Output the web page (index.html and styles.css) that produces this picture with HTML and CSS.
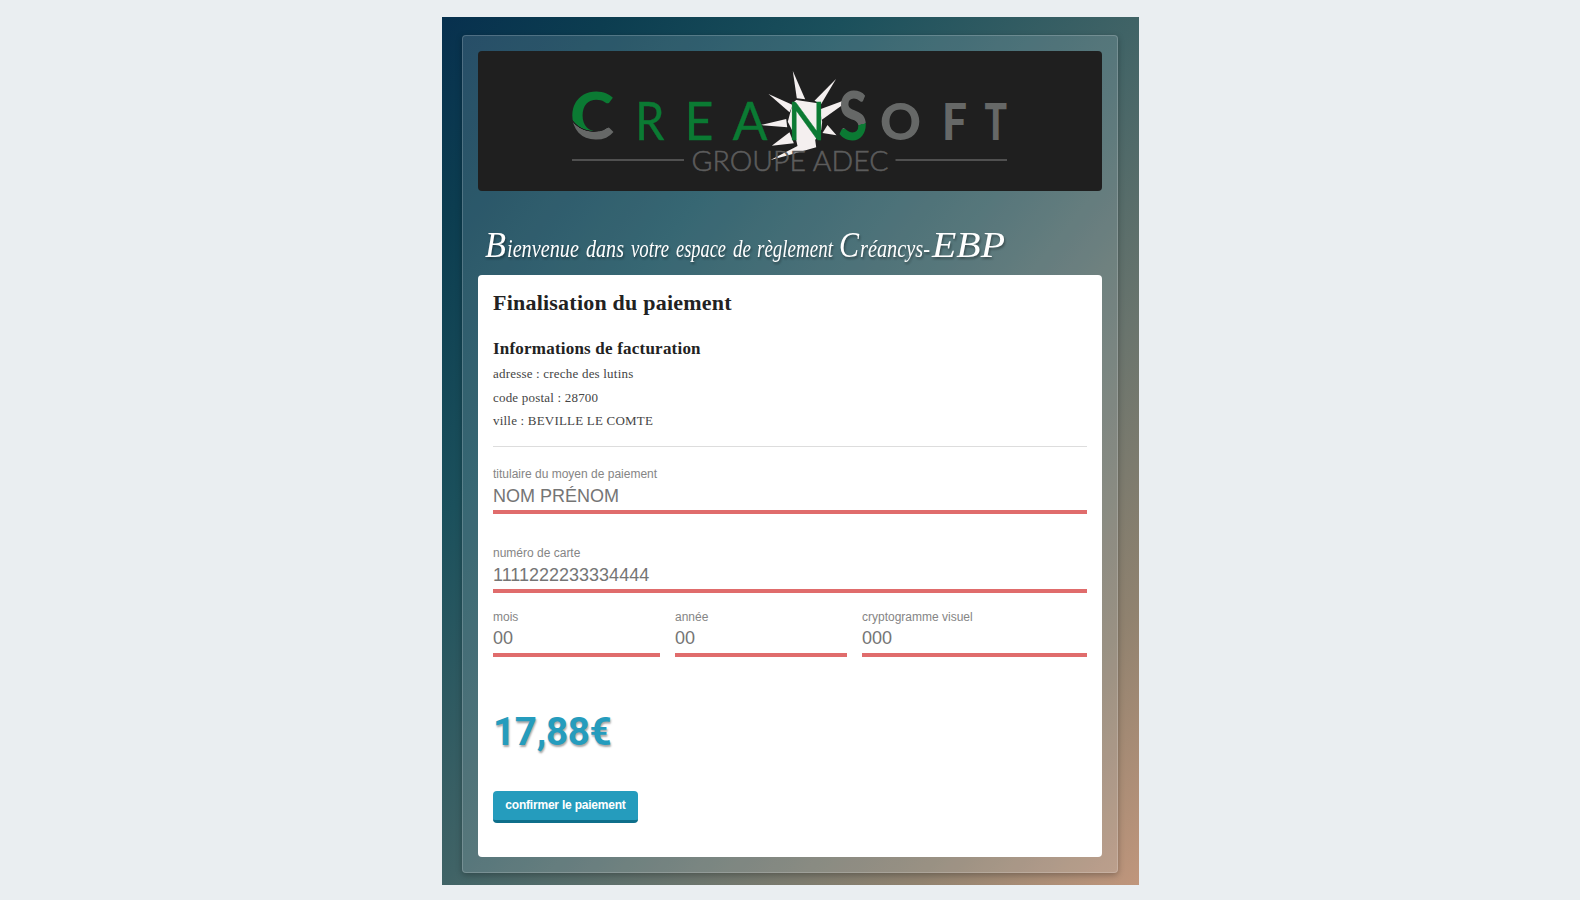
FILE: index.html
```
<!DOCTYPE html>
<html lang="fr">
<head>
<meta charset="utf-8">
<title>Finalisation du paiement</title>
<link rel="stylesheet" href="styles.css">
</head>
<body>
<main class="stage">
  <div class="panel">
    <header class="brand">
      <svg class="logo" viewBox="479 51 623 140" role="img" aria-label="CreanSoft Groupe Adec">
        <defs>
          <radialGradient id="c-fill" gradientUnits="userSpaceOnUse" cx="594" cy="105" r="50">
            <stop offset="0.51" stop-color="#0b7a33"/><stop offset="0.52" stop-color="#1f1f1f"/>
            <stop offset="0.53" stop-color="#1f1f1f"/><stop offset="0.54" stop-color="#666867"/>
          </radialGradient>
          <linearGradient id="s-fill" gradientUnits="userSpaceOnUse" x1="852" y1="124" x2="854" y2="132">
            <stop offset="0.3" stop-color="#666867"/><stop offset="0.35" stop-color="#0b7a33"/>
          </linearGradient>
        </defs>
        <g fill="#f4efef">
          <path d="M793.3 71L797.3 98.3 805.7 99.3Z"/>
          <path d="M836.5 79L815 100.7 821.7 104Z"/>
          <path d="M843 101L820.7 109.3 822 120 843 105Z"/>
          <path d="M837 135.3L828 125 823 133Z"/>
          <path d="M769 94L793.3 105 790 112.3Z"/>
          <path d="M761 125L786.7 119 787.7 127.3Z"/>
          <path d="M772.3 145.7L790 132.3 794.3 143.3Z"/>
          <path d="M796.7 100L818.3 103.3 822.7 121.7 821.7 130 815.7 140 816.7 147.3 786 156 771 160 798 146 796 137 788.3 121.7 793.3 103Z"/>
        </g>
        <g class="logo-thin">
          <text x="635.500" y="140" textLength="29.500" lengthAdjust="spacingAndGlyphs">R</text>
          <text x="685" y="140" textLength="29" lengthAdjust="spacingAndGlyphs">E</text>
          <text x="733" y="140" textLength="35" lengthAdjust="spacingAndGlyphs">A</text>
          <text x="788" y="140" textLength="38" lengthAdjust="spacingAndGlyphs">N</text>
        </g>
        <g class="logo-bold">
          <text class="logo-c" x="570.500" y="139" textLength="44" lengthAdjust="spacingAndGlyphs">C</text>
          <text class="logo-s" x="839" y="140" textLength="29" lengthAdjust="spacingAndGlyphs">S</text>
          <text x="880.500" y="140" textLength="41" lengthAdjust="spacingAndGlyphs">O</text>
          <text x="942.500" y="140" textLength="25" lengthAdjust="spacingAndGlyphs">F</text>
          <text x="985" y="140" textLength="22.500" lengthAdjust="spacingAndGlyphs">T</text>
        </g>
        <text class="logo-group" x="692" y="170.500" textLength="197" lengthAdjust="spacingAndGlyphs">GROUPE ADEC</text>
        <path d="M572.500 160H684.500M896 160H1007.500" stroke="#505050" stroke-width="2"/>
      </svg>
    </header>
    <p class="welcome"><svg class="welcome-line" viewBox="478 229 624 46">
      <text class="cap" x="485" y="257" textLength="21" lengthAdjust="spacingAndGlyphs">B</text>
      <text x="507" y="257" textLength="72" lengthAdjust="spacingAndGlyphs">ienvenue</text>
      <text x="586" y="257" textLength="38" lengthAdjust="spacingAndGlyphs">dans</text>
      <text x="631" y="257" textLength="38" lengthAdjust="spacingAndGlyphs">votre</text>
      <text x="676" y="257" textLength="50" lengthAdjust="spacingAndGlyphs">espace</text>
      <text x="733" y="257" textLength="18" lengthAdjust="spacingAndGlyphs">de</text>
      <text x="757" y="257" textLength="76" lengthAdjust="spacingAndGlyphs">règlement</text>
      <text class="cap" x="839" y="257" textLength="20" lengthAdjust="spacingAndGlyphs">C</text>
      <text x="860" y="257" textLength="70" lengthAdjust="spacingAndGlyphs">réancys-</text>
      <text class="cap" x="932" y="257" textLength="73" lengthAdjust="spacingAndGlyphs">EBP</text>
    </svg></p>
    <section class="sheet">
      <h1>Finalisation du paiement</h1>
      <h2>Informations de facturation</h2>
      <div class="address">
        <p>adresse : creche des lutins</p>
        <p>code postal : 28700</p>
        <p>ville : BEVILLE LE COMTE</p>
      </div>
      <form>
        <label class="field holder">titulaire du moyen de paiement<input placeholder="NOM PRÉNOM"></label>
        <label class="field number">numéro de carte<input placeholder="1111222233334444"></label>
        <div class="row">
          <label class="field">mois<input placeholder="00"></label>
          <label class="field">année<input placeholder="00"></label>
          <label class="field">cryptogramme visuel<input placeholder="000"></label>
        </div>
        <p class="price">17,88€</p>
        <button type="button" class="confirm">confirmer le paiement</button>
      </form>
    </section>
  </div>
</main>
</body>
</html>
```
FILE: styles.css
```
* { box-sizing: border-box; }
body { margin: 0; height: 900px; background: #eaeef1; overflow: hidden; font-family: "Liberation Sans", Arial, sans-serif; }
h1, h2, p { margin: 0; }
.stage {
  width: 697px; height: 868px; margin: 17px 0 0 442px; padding: 18px 21px 12px 20px;
  background: linear-gradient(to bottom right, #07304e 0%, #0c3d50 12%, #1b505c 29%, #406366 50%, #69746d 67%, #90826f 84%, #c0967c 100%);
}
.panel {
  height: 838px; padding: 15px; border: 1px solid rgba(255,255,255,.18); border-radius: 4px;
  background: rgba(205,225,235,.16); box-shadow: 0 2px 6px rgba(0,0,0,.28);
}
.brand { height: 140px; border-radius: 4px; background: #1f1f1f; overflow: hidden; }
.logo { display: block; width: 100%; height: 140px; }
.logo-thin { font-family: Lato, sans-serif; font-size: 52px; fill: #0b7a33; stroke: #0b7a33; stroke-width: .3px; }
.logo-bold { font-family: Lato, sans-serif; font-weight: 900; font-size: 52px; fill: #666867; }
.logo-c { fill: url(#c-fill); font-size: 65px; }
.logo-s { fill: url(#s-fill); font-size: 66px; }
.logo-group { font-family: Lato, sans-serif; font-size: 27px; font-weight: 300; fill: #5c5c5c; stroke: #5c5c5c; stroke-width: .5px; }
.welcome { height: 84px; padding-top: 38px; }
.welcome-line {
  display: block; width: 100%; height: 46px; overflow: visible; fill: #fff;
  font: italic 25px "Liberation Serif", serif; filter: drop-shadow(1px 2px 1px rgba(0,0,0,.35));
}
.cap { font-size: 35px; }
.sheet { height: 582px; padding: 13px 15px 0; border-radius: 4px; background: #fff; }
h1, h2, .address { font-family: "Liberation Serif", "Times New Roman", serif; color: #222; }
h1 { font-size: 22px; line-height: 30px; letter-spacing: .22px; }
h2 { margin-top: 19px; font-size: 17px; line-height: 24px; letter-spacing: .21px; }
.address { margin-top: 1.3px; padding-bottom: 13.2px; border-bottom: 1px solid #ddd; font-size: 13px; line-height: 23.4px; letter-spacing: .2px; color: #444; }
.field { display: block; font-size: 12px; line-height: 16px; color: #858585; }
.holder { margin-top: 19px; }
.number { margin-top: 31px; }
.field input {
  display: block; width: 100%; height: 32px; padding: 2px 0 0; border: 0; border-bottom: 4px solid #e06c6c;
  background: none; font: 18px "Liberation Sans", Arial, sans-serif; color: #757575; outline: 0;
}
.row .field input { padding: 0; }
.field input::placeholder { color: #757575; opacity: 1; }
.row { display: grid; grid-template-columns: 167px 172px 225px; gap: 15px; margin-top: 16px; }
.price { margin-top: 55px; font: 700 38.5px/40px Roboto, sans-serif; letter-spacing: -.25px; color: #259cbd; text-shadow: 1px 2px 2px rgba(0,0,0,.35); }
.confirm {
  display: block; width: 145px; height: 32px; margin-top: 39px; padding: 0; border: 0; border-bottom: 3px solid #0e6f8b;
  border-radius: 4px; background: #259cbd; color: #fff; font: bold 12px "Liberation Sans", Arial, sans-serif; letter-spacing: -.21px; white-space: nowrap;
}
```
